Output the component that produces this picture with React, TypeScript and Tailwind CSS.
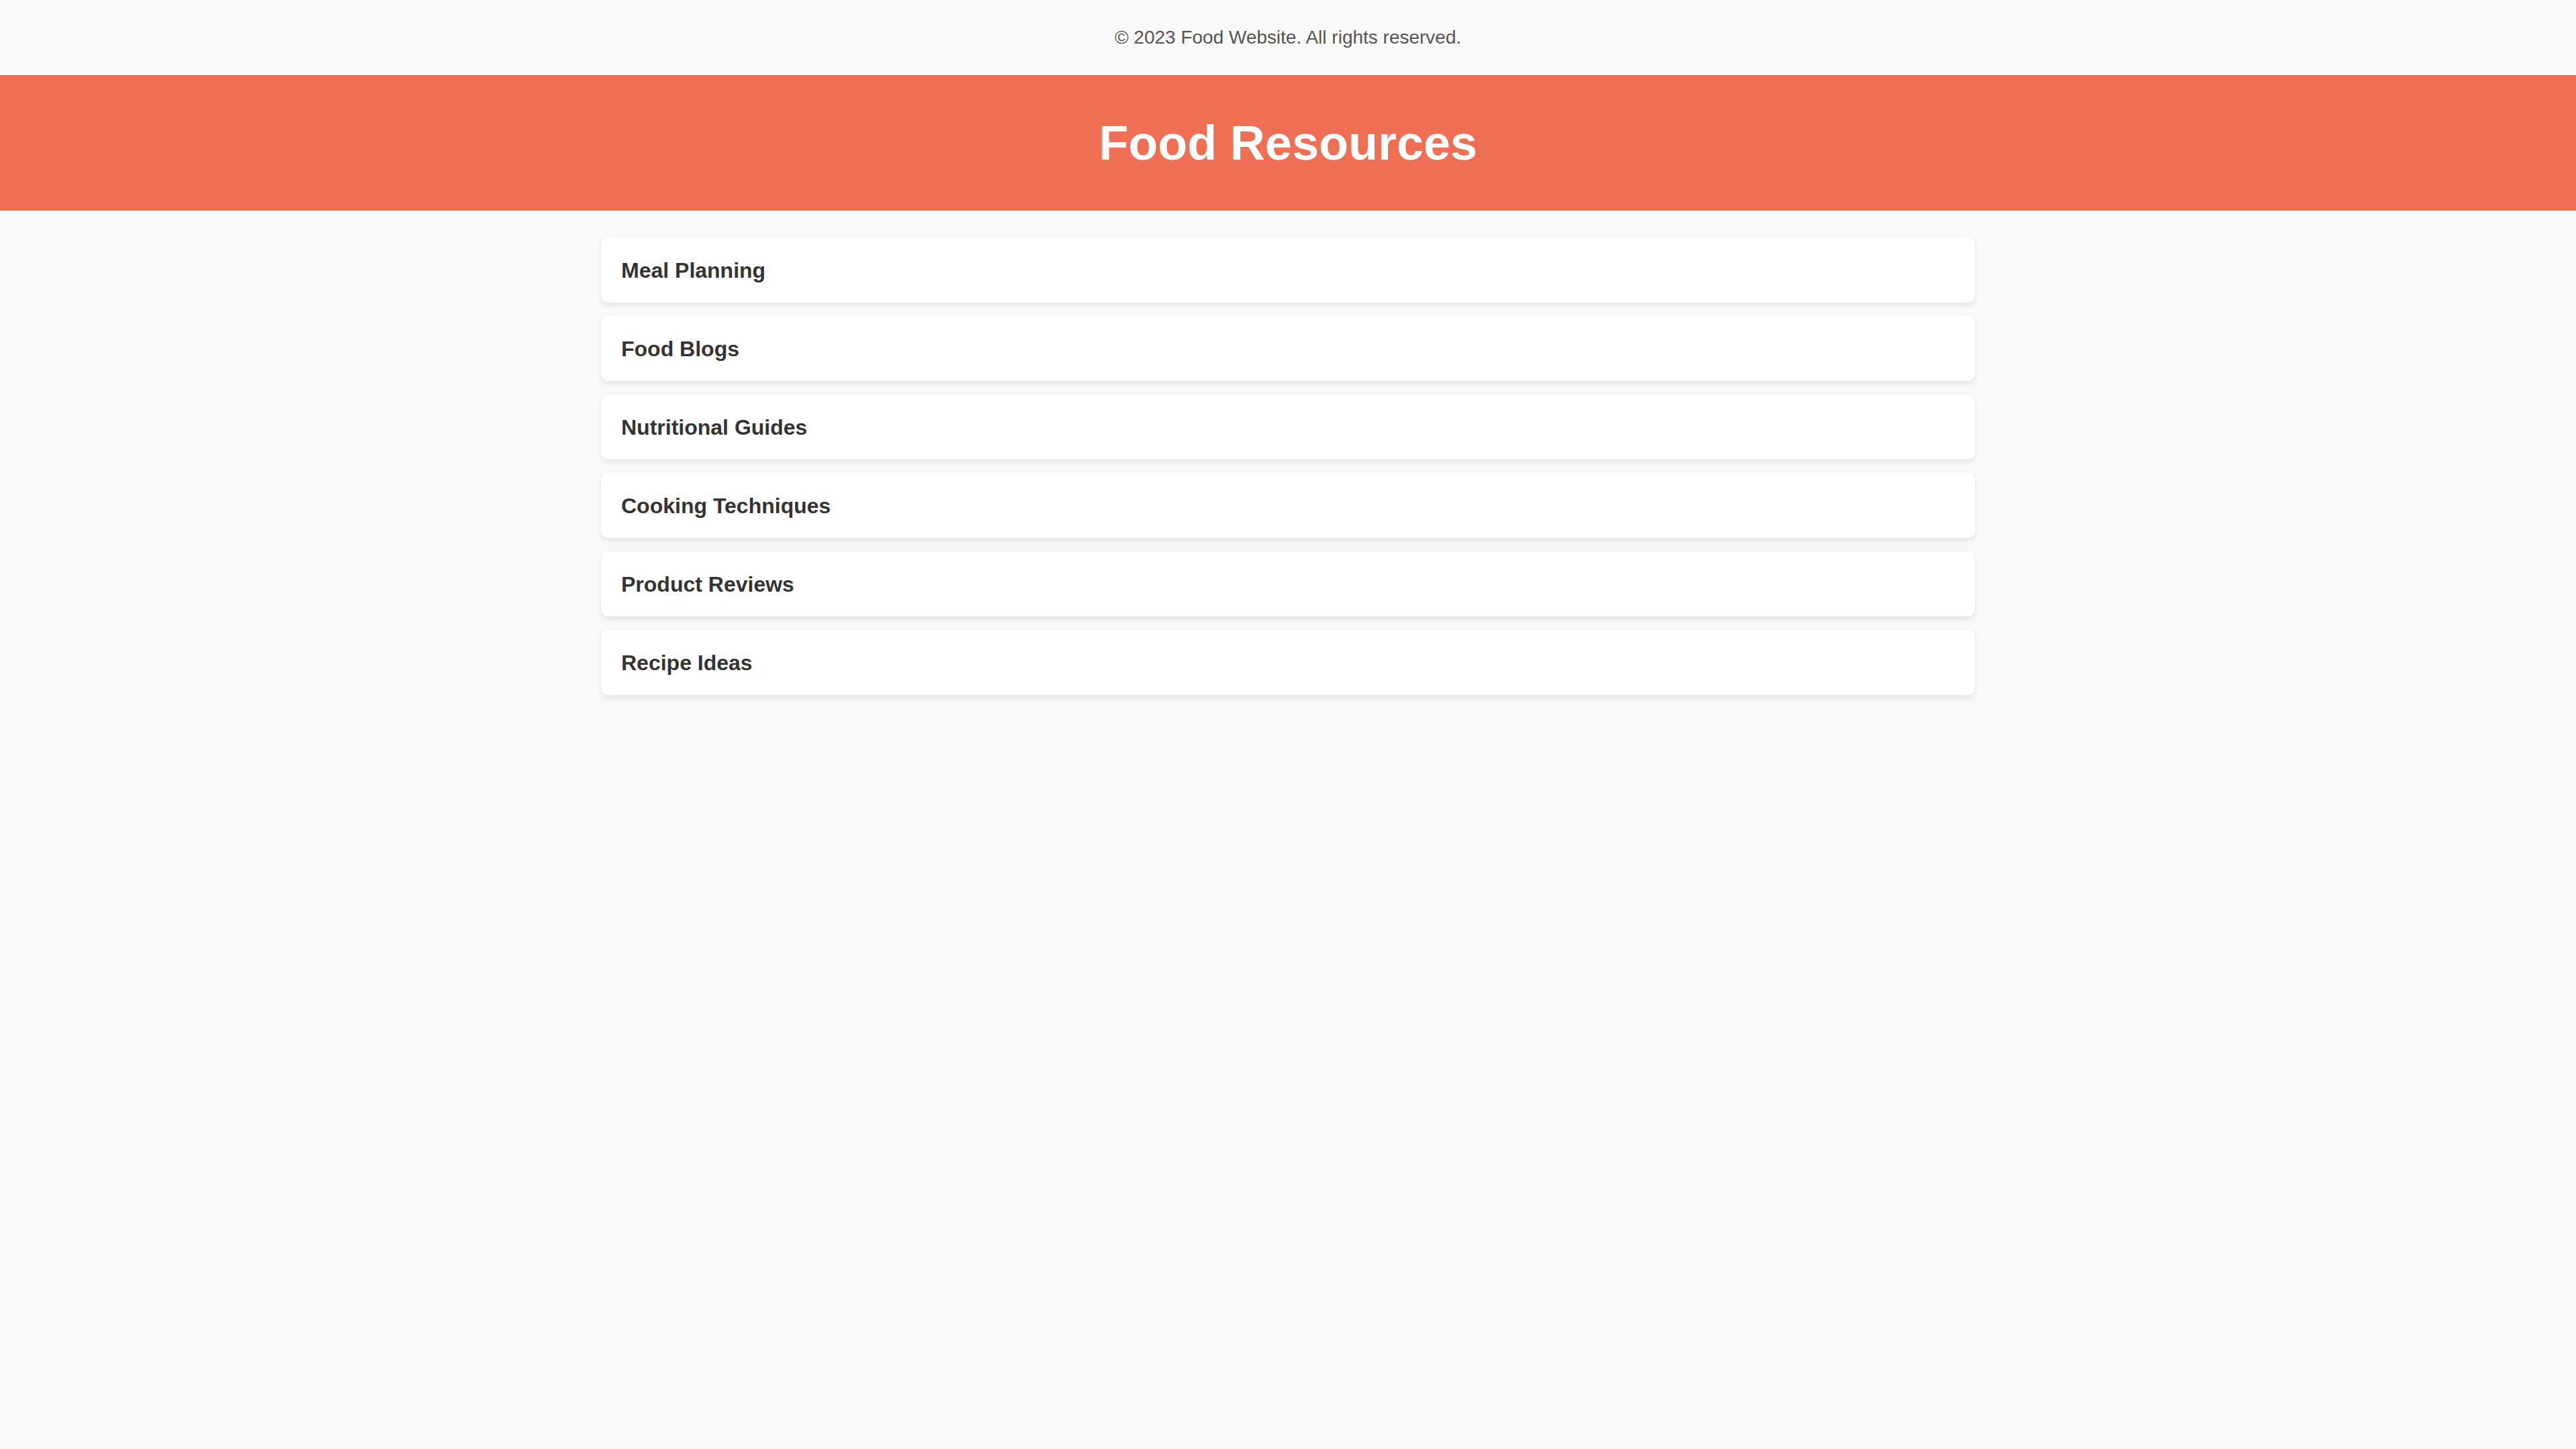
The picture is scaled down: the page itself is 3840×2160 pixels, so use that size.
import React from "react";

const items = [
  "Meal Planning",
  "Food Blogs",
  "Nutritional Guides",
  "Cooking Techniques",
  "Product Reviews",
  "Recipe Ideas",
];

export default function App() {
  return (
    <div
      className="min-h-screen w-full bg-[#f9f9f9]"
      style={{ fontFamily: '"Liberation Sans", Arial, sans-serif' }}
    >
      <footer className="h-[112px] flex items-center justify-center text-[28px] leading-none text-[#555555]">
        © 2023 Food Website. All rights reserved.
      </footer>
      <header className="h-[202px] bg-[#ee6f53] flex items-center justify-center">
        <h1 className="text-[72px] font-bold text-white leading-none">Food Resources</h1>
      </header>
      <main className="w-[2048px] mx-auto mt-[40px] flex flex-col gap-[20px]">
        {items.map((t) => (
          <div
            key={t}
            className="bg-white rounded-[10px] h-[97px] px-[30px] flex items-center shadow-[0_4px_10px_rgba(0,0,0,0.09)]"
          >
            <span className="text-[32px] font-bold text-[#333333] leading-none">{t}</span>
          </div>
        ))}
      </main>
    </div>
  );
}
